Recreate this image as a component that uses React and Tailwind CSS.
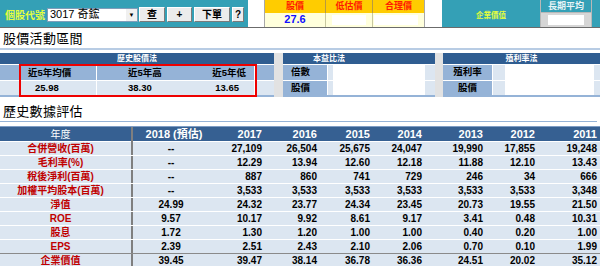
const FONT = { fontFamily: '"Liberation Sans", "Noto Sans CJK TC", sans-serif' };

const years = ['2018 (預估)', '2017', '2016', '2015', '2014', '2013', '2012', '2011'];

const rows = [
  ['合併營收(百萬)', '--', '27,109', '26,504', '25,675', '24,047', '19,990', '17,855', '19,248'],
  ['毛利率(%)', '--', '12.29', '13.94', '12.60', '12.18', '11.88', '12.10', '13.43'],
  ['稅後淨利(百萬)', '--', '887', '860', '741', '729', '246', '34', '666'],
  ['加權平均股本(百萬)', '--', '3,533', '3,533', '3,533', '3,533', '3,533', '3,533', '3,348'],
  ['淨值', '24.99', '24.32', '23.77', '24.34', '23.45', '20.73', '19.55', '21.50'],
  ['ROE', '9.57', '10.17', '9.92', '8.61', '9.17', '3.41', '0.48', '10.31'],
  ['股息', '1.72', '1.30', '1.20', '1.00', '1.00', '0.40', '0.20', '1.00'],
  ['EPS', '2.39', '2.51', '2.43', '2.10', '2.06', '0.70', '0.10', '1.99'],
  ['企業價值', '39.45', '39.47', '38.14', '36.78', '36.36', '24.51', '20.02', '35.12'],
];

const GRID = 'grid grid-cols-[133px_80px_52px_55px_53px_52px_61px_52px_62px]';

function Btn({ children, w }) {
  return (
    <div
      className={`${w} h-[15px] flex items-center justify-center bg-[#ececec] border border-t-white border-l-white border-r-[#7a7a7a] border-b-[#7a7a7a] text-[10px] font-bold text-black leading-none`}
    >
      {children}
    </div>
  );
}

function TopBar() {
  return (
    <div className="flex h-[28px] border-b border-[#6b6b6b]">
      {/* stock selector */}
      <div className="w-[248px] bg-[#34a0b6] flex items-center pl-[5px]">
        <span className="text-[10px] font-bold text-[#e6ff3c] w-[42px] mt-[3px]">個股代號</span>
        <div className="w-[91px] h-[14px] bg-white border border-[#7f9db9] flex items-center justify-between pl-[2px] mt-[2px]">
          <span className="text-[11px] text-black leading-none">3017 奇鋐</span>
          <div className="w-[11px] h-[12px] bg-[#f0f0f0] flex items-center justify-center text-[6px] leading-none">▼</div>
        </div>
        <div className="flex gap-[2px] ml-[1px] mt-[2px]">
          <Btn w="w-[26px]">查</Btn>
          <Btn w="w-[25px]">+</Btn>
          <Btn w="w-[36px]">下單</Btn>
          <Btn w="w-[12px]">?</Btn>
        </div>
      </div>
      <div className="w-[16px] bg-white" />
      {/* price box */}
      <div className="w-[161px] border-x border-[#a8a8a8] flex flex-col">
        <div className="grid grid-cols-[61px_47px_1fr] h-[13px] bg-[#ffcc00] text-[9px] font-bold text-[#ff1a00] leading-[13px] text-center">
          <div className="border-r border-[#b89a40]">股價</div>
          <div className="border-r border-[#b89a40]">低估價</div>
          <div>合理價</div>
        </div>
        <div className="grid grid-cols-[61px_47px_1fr] flex-1 bg-[#ffffdc] text-center">
          <div className="border-r border-[#c8c8a0] text-[11px] font-bold text-[#1010ff] leading-[13px]">27.6</div>
          <div className="border-r border-[#c8c8a0] flex items-center px-[6px]">
            <div className="w-full h-[10px] bg-white" />
          </div>
          <div className="flex items-center px-[1px] pr-[6px]">
            <div className="w-full h-[10px] bg-white" />
          </div>
        </div>
      </div>
      <div className="w-[17px] bg-white" />
      {/* enterprise value */}
      <div className="flex-1 bg-[#34a0b6] flex">
        <div className="w-[98px] flex items-center justify-center pt-[4px]">
          <span className="text-[7.5px] font-bold text-[#e6ff3c]">企業價值</span>
        </div>
        <div className="w-[52px] border-x border-[#b8b8b8] flex flex-col">
          <div className="h-[13px] text-[9px] font-bold text-[#e8f4f6] text-center leading-[13px] border-b border-[#b8b8b8]">長期平均</div>
          <div className="flex-1 bg-[#d6d6d6] flex items-center px-[7px]">
            <div className="w-full h-[10px] bg-white" />
          </div>
        </div>
        <div className="flex-1" />
      </div>
    </div>
  );
}

function Heading({ children, className }) {
  return (
    <div className={`px-[3px] flex items-end text-[13px] text-black leading-none ${className}`}>
      <span className="mb-[3px] tracking-[0.3px]">{children}</span>
    </div>
  );
}

function PanelHeader({ children, className = '' }) {
  return (
    <div className={`h-[11px] bg-[#2f5d91] text-white text-[8px] font-bold leading-[11px] ${className}`}>
      {children}
    </div>
  );
}

function Panels() {
  return (
    <div className="relative mt-[3px] flex h-[44px] bg-[#e2e2e2]">
      {/* 歷史股價法 */}
      <div className="w-[274px] bg-white flex flex-col border-b-2 border-[#95b3d7]">
        <PanelHeader className="text-center">歷史股價法</PanelHeader>
        <div className="flex h-[16px] bg-[#95b3d7] text-[9.5px] font-bold text-black leading-[16px] border-t border-white">
          <div className="w-[20px] border-r border-white" />
          <div className="w-[77px] border-r border-white pl-[8px]">近5年均價</div>
          <div className="w-[158px] border-r border-white flex justify-between pl-[31px] pr-[8px]">
            <span>近5年高</span>
            <span>近5年低</span>
          </div>
          <div className="flex-1" />
        </div>
        <div className="flex flex-1 bg-[#dce6f1] text-[9.5px] font-bold text-black leading-[14px] border-t border-white">
          <div className="w-[20px] border-r border-white" />
          <div className="w-[77px] border-r border-white pl-[15px]">25.98</div>
          <div className="w-[158px] border-r border-white flex justify-between pl-[31px] pr-[15px]">
            <span>38.30</span>
            <span>13.65</span>
          </div>
          <div className="flex-1" />
        </div>
      </div>
      <div className="w-[9px]" />
      {/* 本益比法 */}
      <div className="w-[152px] bg-white flex flex-col border-b-2 border-[#95b3d7]">
        <PanelHeader className="pl-[30px]">本益比法</PanelHeader>
        {['倍數', '股價'].map((t, i) => (
          <div key={t} className={`flex border-t border-white ${i === 0 ? 'h-[16px]' : 'flex-1'}`}>
            <div className="w-[45px] bg-[#95b3d7] text-[9.5px] font-bold text-black pl-[8px] flex items-center border-r border-white">{t}</div>
            <div className="w-[5px] bg-[#dce6f1]" />
            <div className="flex-1 bg-white" />
            <div className="w-[10px] bg-[#dce6f1]" />
          </div>
        ))}
      </div>
      <div className="w-[8px]" />
      {/* 殖利率法 */}
      <div className="flex-1 bg-white flex flex-col border-b-2 border-[#95b3d7]">
        <PanelHeader className="text-center">殖利率法</PanelHeader>
        {['殖利率', '股價'].map((t, i) => (
          <div key={t} className={`flex border-t border-white ${i === 0 ? 'h-[16px]' : 'flex-1'}`}>
            <div className="w-[50px] bg-[#95b3d7] text-[9.5px] font-bold text-black flex items-center justify-center border-r border-white">{t}</div>
            <div className="w-[12px] bg-[#dce6f1]" />
            <div className="flex-1 bg-white" />
            <div className="w-[6px] bg-[#dce6f1]" />
          </div>
        ))}
      </div>
      {/* highlight annotation */}
      <div className="absolute left-[19px] top-[11px] w-[238px] h-[33px] border-2 border-[#ee0000]" />
    </div>
  );
}

function HistoryTable() {
  return (
    <div className="mt-[4px]">
      <div className={`${GRID} h-[15px] bg-[#366092] text-white leading-[15px] border-t border-[#7d9cc4]`}>
        <div className="text-center pr-[10px] text-[10px] border-r-2 border-[#7f7f7f]">年度</div>
        {years.map((y, i) => (
          <div key={y} className={`text-[11px] font-bold ${i === 0 ? 'text-center pl-[2px]' : 'text-right pr-[3px]'}`}>{y}</div>
        ))}
      </div>
      {rows.map((r, ri) => (
        <div
          key={r[0]}
          className={`${GRID} h-[14px] bg-[#dce6f1] leading-[13px] border-t ${ri === rows.length - 1 ? 'border-[#8a8a8a]' : 'border-white'}`}
        >
          <div className="text-center pr-[10px] text-[10px] font-bold text-[#c00000] border-r-2 border-[#7f7f7f]">{r[0]}</div>
          {r.slice(1).map((v, i) => (
            <div key={i} className={`text-[10px] font-bold text-black ${i === 0 ? 'text-center pr-[4px]' : 'text-right pr-[3px]'}`}>{v}</div>
          ))}
        </div>
      ))}
    </div>
  );
}

export default function App() {
  return (
    <div className="w-[600px] h-[266px] overflow-hidden bg-white" style={FONT}>
      <TopBar />
      <Heading className="h-[22px] border-b-2 border-[#b8cce4]">股價活動區間</Heading>
      <Panels />
      <Heading className="h-[25px] border-b border-[#95b3d7] mr-[3px]">歷史數據評估</Heading>
      <HistoryTable />
    </div>
  );
}
